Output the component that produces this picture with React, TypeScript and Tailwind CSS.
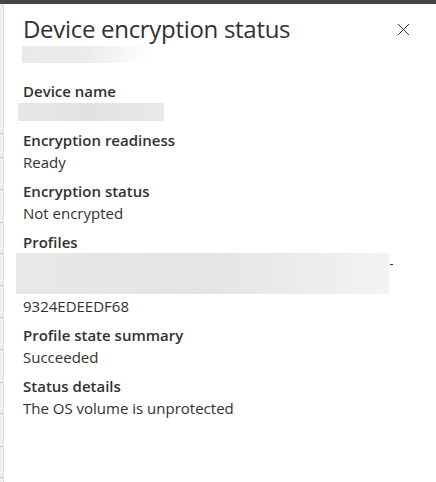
const rows = [133, 157, 189, 222, 253, 285, 317, 349, 382, 413, 446, 477]

function Blur({ className }: { className: string }) {
  return <div className={className} />
}

function Field({ label, children }: { label: string; children: React.ReactNode }) {
  return (
    <div className="flex flex-col">
      <div className="text-[15px] leading-[20px] font-semibold text-[#323130]">{label}</div>
      <div className="mt-[2px] text-[15px] leading-[20px] text-[#323130]">{children}</div>
    </div>
  )
}

export default function App() {
  return (
    <div className="w-[436px] h-[482px] overflow-hidden bg-white flex flex-col" style={{ fontFamily: '"Open Sans", "Noto Sans", sans-serif' }}>
      {/* top bar of the portal behind the blade */}
      <div className="h-[4px] bg-[#474645] shrink-0" />

      <div className="flex flex-1 min-h-0">
        {/* sliver of the page behind */}
        <div className="relative w-[3px] shrink-0 bg-[#f0f0f0]">
          {rows.map((y) => (
            <div key={y} className="absolute left-0 w-[3px] h-[1px] bg-[#c8c8c8]" style={{ top: y - 4 }} />
          ))}
        </div>

        {/* blade */}
        <div className="flex-1 flex flex-col border-l border-[#e1dfdd] shadow-[-2px_0_6px_rgba(0,0,0,0.08)] pl-[19px] pr-[26px]">
          <div className="flex items-start justify-between pt-[9px]">
            <h1 className="text-[24px] leading-[32px] font-normal text-[#323130] tracking-[-0.3px]">Device encryption status</h1>
            <button className="mt-[9px] w-[14px] h-[14px] flex items-center justify-center text-[#323130]">
              <svg width="13" height="13" viewBox="0 0 13 13" fill="none" stroke="currentColor" strokeWidth="1">
                <path d="M1 1L12 12M12 1L1 12" />
              </svg>
            </button>
          </div>
          <Blur className="mt-[1px] -ml-[1px] w-[128px] h-[17px] bg-gradient-to-r from-[#e9e9e9] via-[#ececec] to-white" />

          <div className="mt-[18px] flex flex-col gap-[9px]">
            <Field label="Device name">
              <div className="-ml-[5px] w-[146px] h-[18px] bg-gradient-to-r from-[#e6e6e6] via-[#e2e2e2] to-[#e9e9e9]" />
            </Field>
            <Field label="Encryption readiness">Ready</Field>
            <Field label="Encryption status">Not encrypted</Field>
            <div className="flex flex-col">
              <div className="text-[15px] leading-[20px] font-semibold text-[#323130]">Profiles</div>
              <div className="relative mt-[1px] -ml-[7px] w-[373px] h-[41px] bg-gradient-to-r from-[#e8e8e8] via-[#e4e4e4] to-[#f3f3f3]">
                <span className="absolute -right-[4px] top-[11px] w-[3px] h-[1px] bg-[#323130]" />
              </div>
              <div className="mt-[2px] text-[15px] leading-[20px] text-[#323130]">9324EDEEDF68</div>
            </div>
            <Field label="Profile state summary">Succeeded</Field>
            <Field label="Status details">The OS volume is unprotected</Field>
          </div>
        </div>
      </div>
    </div>
  )
}
